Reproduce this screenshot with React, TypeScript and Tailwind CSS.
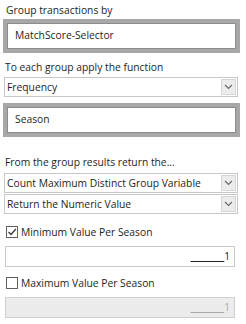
import React from "react";

function Chevron() {
  return (
    <svg width="9" height="6" viewBox="0 0 9 6">
      <path d="M1 1 L4.5 4.5 L8 1" fill="none" stroke="#6b6b6b" strokeWidth="1.2" />
    </svg>
  );
}

function Dropdown({ text }: { text: string }) {
  return (
    <div className="flex h-[20px] w-[234px] items-center border border-[#c8c8c8] bg-white">
      <div className="flex-1 whitespace-nowrap pl-[2px] text-[10.3px] leading-none text-[#1e1e1e]">{text}</div>
      <div className="mr-[1px] flex h-[16px] w-[15px] items-center justify-center border border-[#d6d6d6] bg-[#ececec]">
        <Chevron />
      </div>
    </div>
  );
}

function Box({ text }: { text: string }) {
  return (
    <div className="w-[237px] bg-[#a8a8a8] p-[4px]">
      <div className="flex h-[26px] items-center border border-[#8c8c8c] bg-white pl-[7px] text-[10.3px] text-[#1e1e1e]">
        {text}
      </div>
    </div>
  );
}

function Check({ checked, label }: { checked: boolean; label: string }) {
  return (
    <div className="flex items-center gap-[3px] pl-[6px] text-[10.3px] leading-[16px] text-[#1e1e1e]">
      <div className="flex h-[12px] w-[12px] items-center justify-center border border-[#5f5f5f] bg-white">
        {checked && (
          <svg width="10" height="10" viewBox="0 0 10 10">
            <path d="M1.5 5 L4 7.5 L8.8 2" fill="none" stroke="#333" strokeWidth="1.2" />
          </svg>
        )}
      </div>
      <span>{label}</span>
    </div>
  );
}

function NumInput({ disabled }: { disabled?: boolean }) {
  return (
    <div
      className={
        "ml-[5px] flex h-[21px] w-[230px] items-center justify-end border pr-[4px] text-[10px] " +
        (disabled ? "border-[#cfcfcf] bg-[#ececec] text-[#a8a8a8]" : "border-[#c8c8c8] bg-white text-[#222]")
      }
    >
      <span className="underline decoration-1 underline-offset-1">
        {"\u00a0\u00a0\u00a0\u00a0\u00a0\u00a0\u00a0\u00a0\u00a0\u00a0\u00a0\u00a0\u00a0"}
      </span>
      <span>1</span>
    </div>
  );
}

export default function App() {
  return (
    <div className="h-[324px] w-[246px] bg-white font-['Open_Sans','Noto_Sans',sans-serif]">
      <div className="pl-[6px] pt-[2px] text-[10.3px] leading-[16px] text-[#1e1e1e]">Group transactions by</div>
      <div className="ml-[3px] mt-[1px]">
        <Box text="MatchScore-Selector" />
      </div>
      <div className="mt-[6px] pl-[5px] text-[10.3px] leading-[16px] text-[#1e1e1e]">To each group apply the function</div>
      <div className="ml-[4px] mt-[2px]">
        <Dropdown text="Frequency" />
      </div>
      <div className="ml-[3px] mt-[6px]">
        <Box text="Season" />
      </div>
      <div className="mt-[17px] pl-[5px] text-[10.3px] leading-[16px] text-[#1e1e1e]">From the group results return the...</div>
      <div className="ml-[4px] mt-[3px]">
        <Dropdown text="Count Maximum Distinct Group Variable" />
      </div>
      <div className="ml-[4px] mt-[1px]">
        <Dropdown text="Return the Numeric Value" />
      </div>
      <div className="mt-[10px]">
        <Check checked label="Minimum Value Per Season" />
      </div>
      <div className="mt-[6px]">
        <NumInput />
      </div>
      <div className="mt-[8px]">
        <Check checked={false} label="Maximum Value Per Season" />
      </div>
      <div className="mt-[6px]">
        <NumInput disabled />
      </div>
    </div>
  );
}
